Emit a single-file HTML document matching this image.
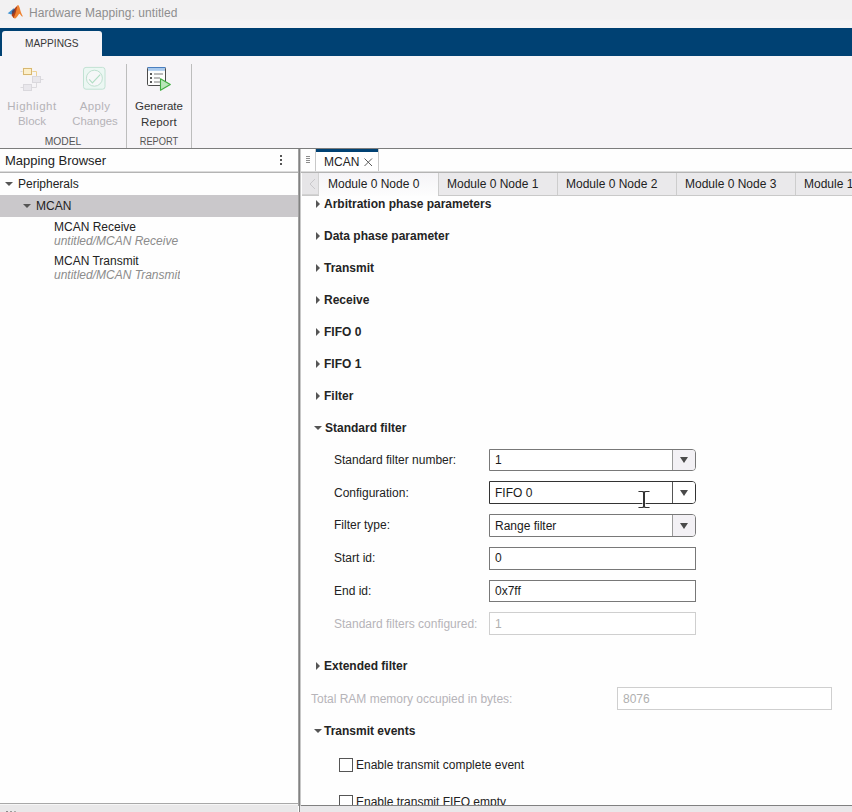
<!DOCTYPE html>
<html>
<head>
<meta charset="utf-8">
<title>Hardware Mapping: untitled</title>
<style>
*{box-sizing:border-box;margin:0;padding:0}
html,body{width:852px;height:812px;overflow:hidden;background:#fdfdfd;font-family:"Liberation Sans",sans-serif;color:#1a1a1a}
.abs{position:absolute}
#root{position:relative;width:852px;height:812px;overflow:hidden;background:#fefefe}
.t{position:absolute;white-space:nowrap;line-height:1}
/* title */
#title{left:0;top:0;width:852px;height:28px;background:linear-gradient(#f2f1f2 0,#f2f1f2 19px,#f6f5f6 21px,#f6f5f6 28px)}
#bluebar{left:0;top:28px;width:852px;height:28px;background:#004173}
#maptab{left:2px;top:31px;width:100px;height:26px;background:#f6f4f7;border-radius:3px 3px 0 0}
#strip{left:0;top:56px;width:852px;height:92px;background:#f6f4f7}
#stripline{left:0;top:148px;width:852px;height:1px;background:#7c7c7c}
.vsep{position:absolute;width:1px;background:#bdbdbd;top:64px;height:84px}
.tsl{font-size:11.5px;text-align:center;line-height:14px}
.dis{color:#b5b3b8}
.sec{font-size:10.5px;color:#555;text-align:center}
/* panels */
#left{left:0;top:149px;width:298px;height:655px;background:#fefefe}
#divider{display:none}
#right{left:300px;top:149px;width:552px;height:657px;background:#fefefe}
#bottom{left:0;top:804px;width:298px;height:9px;background:#e9e8e9}
.b{font-weight:bold;color:#242424}
.f13{font-size:13px}
.f12{font-size:12px}
.inp{position:absolute;height:22px;border:1px solid #787878;background:#fff;font-size:12px;line-height:20px;padding-left:5px}
.dd{border-radius:0 4px 4px 0}
.ddbtn{position:absolute;right:0;top:0;bottom:0;width:23px;border-left:1px solid #9a9a9a;background:#f3f1f5;border-radius:0 3px 3px 0}
.ddbtn:after{content:"";position:absolute;left:7px;top:7px;border-left:4.5px solid transparent;border-right:4.5px solid transparent;border-top:6px solid #4a4a4a}
.dd2:after{top:8px}
.tri-r{position:absolute;width:0;height:0;border-top:4px solid transparent;border-bottom:4px solid transparent;border-left:4px solid #555}
.tri-d{position:absolute;width:0;height:0;border-left:4px solid transparent;border-right:4px solid transparent;border-top:4px solid #555}
.cb{position:absolute;width:14px;height:14px;border:1px solid #555;background:#fff}
</style>
</head>
<body>
<div id="root">
  <!-- title bar -->
  <div id="title" class="abs"></div>
  <svg class="abs" style="left:7px;top:4px" width="17" height="16" viewBox="0 0 17 16">
    <path d="M0.600 9.200C2.500 8.300 4.500 6.300 6.500 4.300L8 6.500L6 10.800C4.500 10.500 2.500 10 0.600 9.200Z" fill="#3f93d2"/>
    <path d="M5 7.500L8.500 3.500L10.500 1.500L11 10L8.500 14.300L6.500 14L4.800 11.500Z" fill="#b13f16"/>
    <path d="M5 7L8 4.500L7.500 8L5.500 10.500Z" fill="#28467c" opacity="0.700"/>
    <path d="M10.600 1C11.600 0.600 12.400 2.500 13 5C13.800 8 14.800 10.800 16 12.600L14.600 12.300C13.600 10.800 12.900 9.600 12.200 9.700C11.200 11.300 9.600 14 7.800 14.600L6.600 13.600C8.800 10.500 9.600 4.500 10.600 1Z" fill="#ee8230"/>
  </svg>
  <div class="t" id="ttl" style="left:29px;top:7px;font-size:12px;color:#8e8e8e;letter-spacing:0.07px">Hardware Mapping: untitled</div>

  <div id="bluebar" class="abs"></div>
  <div id="maptab" class="abs"></div>
  <div class="t" id="mp" style="left:25px;top:38px;font-size:11px;color:#383838;transform:scaleX(0.924);transform-origin:0 0">MAPPINGS</div>

  <div id="strip" class="abs"></div>
  <div id="stripline" class="abs"></div>
  <div class="vsep" style="left:126px"></div>
  <div class="vsep" style="left:191px"></div>

  <!-- toolstrip icons -->
  <svg class="abs" style="left:19px;top:66px" width="26" height="26" viewBox="0 0 26 26">
    <g fill="none" stroke-width="1">
      <path d="M1.500 5.500h3M21.500 13.500h3M17.500 17v4.500h-5M1.500 21.500h3" stroke="#dcdade"/>
      <path d="M12.500 5.500h5v4.500" stroke="#ecd193"/>
    </g>
    <rect x="3.500" y="1.500" width="10" height="8" fill="#fdf4dc" opacity="0.900"/>
    <rect x="4.500" y="2.500" width="8" height="6" fill="#fcefcb" stroke="#d8b772"/>
    <rect x="13.500" y="10.500" width="8" height="6" fill="#e9e7ec" stroke="#dad8dd"/>
    <rect x="4.500" y="18.500" width="8" height="6" fill="#e9e7ec" stroke="#dad8dd"/>
  </svg>
  <svg class="abs" style="left:82px;top:66px" width="25" height="25" viewBox="0 0 25 25">
    <rect x="1.500" y="1.400" width="21.500" height="21.800" rx="2.500" fill="#ecf7f3" stroke="#c2e2d4"/>
    <circle cx="12.400" cy="12.200" r="8" fill="#f6f7f8" stroke="#bfe0d0"/>
    <path d="M7.200 13.400l3.200 3.400l7.800-8.100" fill="none" stroke="#b2dec5" stroke-width="1.200"/>
  </svg>
  <svg class="abs" style="left:146px;top:66px" width="26" height="26" viewBox="0 0 26 26">
    <rect x="1.500" y="1.500" width="18" height="18" rx="1.200" fill="#fdfdfd" stroke="#4c4c4c"/>
    <rect x="2" y="2" width="17" height="2.800" fill="#a9c9ed"/>
    <path d="M1.500 1.500h18" stroke="#4a7fc0" stroke-width="1"/>
    <g fill="#5a5a5a"><rect x="4" y="7" width="2" height="2"/><rect x="4" y="11" width="2" height="2"/><rect x="4" y="15" width="2" height="2"/></g>
    <g fill="#7a7a7a"><rect x="8" y="7.500" width="9" height="1"/><rect x="8" y="11.500" width="6" height="1"/><rect x="8" y="15.500" width="6" height="1"/></g>
    <path d="M14.500 12.700l9.800 5.800l-9.800 5.800z" fill="#b9e6b9" stroke="#41ad41" stroke-width="1.100" stroke-linejoin="round"/>
  </svg>

  <div class="t tsl dis" id="l1" style="left:0;width:64px;top:99px;letter-spacing:0.54px">Highlight</div>
  <div class="t tsl dis" id="l2" style="left:0;width:64px;top:114px">Block</div>
  <div class="t tsl dis" id="l3" style="left:64px;width:62px;top:99px;letter-spacing:0.38px">Apply</div>
  <div class="t tsl dis" id="l4" style="left:64px;width:62px;top:114px;transform:scaleX(0.985)">Changes</div>
  <div class="t tsl" id="l5" style="left:127px;width:64px;top:98px;transform:translateY(0.5px);color:#333">Generate</div>
  <div class="t tsl" id="l6" style="left:127px;width:64px;top:114px;transform:translateY(0.5px);color:#333;letter-spacing:0.23px">Report</div>
  <div class="t sec" id="l7" style="left:0;width:126px;top:136px;transform:scaleX(0.98)">MODEL</div>
  <div class="t sec" id="l8" style="left:127px;width:64px;top:136px;transform:scaleX(0.885)">REPORT</div>

  <!-- left panel -->
  <div id="left" class="abs"></div>
  <div class="abs" style="left:0;top:171px;width:298px;height:1px;background:#dcdcdc"></div><div class="abs" style="left:0;top:172px;width:298px;height:1px;background:#b4b4b4"></div>
  <div class="t" style="left:5px;top:154px;font-size:13px;color:#222">Mapping Browser</div>
  <div class="abs" style="left:280px;top:155px;width:2px;height:2px;background:#555;box-shadow:0 4px 0 #555,0 8px 0 #555"></div>
  <div class="tri-d" style="left:5px;top:182px"></div>
  <div class="t f12" style="left:18px;top:178px;color:#222">Peripherals</div>
  <div class="abs" style="left:0;top:195px;width:298px;height:22px;background:#cac8cb"></div>
  <div class="tri-d" style="left:23px;top:204px"></div>
  <div class="t f12" style="left:36px;top:200px;color:#222">MCAN</div>
  <div class="t f12" style="left:54px;top:221px;color:#222">MCAN Receive</div>
  <div class="t f12" style="left:54px;top:235px;color:#8c8c8c;font-style:italic">untitled/MCAN Receive</div>
  <div class="t f12" style="left:54px;top:255px;color:#222">MCAN Transmit</div>
  <div class="t f12" style="left:54px;top:269px;color:#8c8c8c;font-style:italic;width:126px;overflow:hidden">untitled/MCAN Transmit</div>
  

  <div id="divider" class="abs"></div>

  <!-- right panel -->
  <div id="right" class="abs"></div>
  <svg class="abs" style="left:305px;top:155px" width="6" height="9" viewBox="0 0 6 9"><path d="M1 1.500h4M1 3.500h4M1 5.500h4M1 7.500h4" stroke="#8c8c8c" stroke-width="1"/></svg>
  <div class="abs" style="left:315px;top:149px;width:64px;height:23px;background:#fff;border-left:1px solid #c8c8c8;border-right:1px solid #c8c8c8"></div><div class="abs" style="left:316px;top:149px;width:62px;height:3px;background:#004173"></div>
  <div class="t f12" style="left:324px;top:156px;color:#222">MCAN</div>
  <svg class="abs" style="left:364px;top:158px" width="9" height="9" viewBox="0 0 9 9"><path d="M0.500 0.500l7.500 7.500M8 0.500l-7.500 7.500" stroke="#5a5a5a" stroke-width="1" fill="none"/></svg>
  <div class="abs" style="left:300px;top:171px;width:552px;height:1px;background:#dcdcdc"></div><div class="abs" style="left:300px;top:172px;width:552px;height:1px;background:#b4b4b4"></div>

  <!-- subtabs -->
  <div class="abs" style="left:300px;top:173px;width:552px;height:23px;background:#eae9eb;border-bottom:1px solid #c9c9c9"></div>
  <div class="abs" style="left:302px;top:173px;width:17px;height:22px;background:#e6e5e7;border-right:1px solid #d2d2d2;border-bottom:1px solid #d2d2d2"></div><div class="abs" style="left:300px;top:173px;width:2px;height:23px;background:#fefefe"></div>
  <svg class="abs" style="left:309px;top:178px" width="7" height="12" viewBox="0 0 7 12"><path d="M6 1L1 6l5 5" fill="none" stroke="#c9c8cb" stroke-width="1"/></svg>
  <div class="abs" style="left:319px;top:173px;width:119px;height:23px;background:linear-gradient(#f5f4f7,#fdfdfd)"></div>
  <div class="abs" style="left:438px;top:173px;width:1px;height:22px;background:#cdcdcd"></div>
  <div class="abs" style="left:557px;top:173px;width:1px;height:22px;background:#cdcdcd"></div>
  <div class="abs" style="left:676px;top:173px;width:1px;height:22px;background:#cdcdcd"></div>
  <div class="abs" style="left:795px;top:173px;width:1px;height:22px;background:#cdcdcd"></div>
  <div class="t f12" style="left:328px;top:178px;color:#222">Module 0 Node 0</div>
  <div class="t f12" style="left:447px;top:178px;color:#222">Module 0 Node 1</div>
  <div class="t f12" style="left:566px;top:178px;color:#222">Module 0 Node 2</div>
  <div class="t f12" style="left:685px;top:178px;color:#222">Module 0 Node 3</div>
  <div class="t f12" style="left:804px;top:178px;color:#222">Module 1 Node 0</div>

  <!-- sections -->
  <div class="tri-r" style="left:316px;top:200px"></div><div class="t f12 b" style="left:324px;top:198px">Arbitration phase parameters</div>
  <div class="tri-r" style="left:316px;top:232px"></div><div class="t f12 b" style="left:324px;top:230px">Data phase parameter</div>
  <div class="tri-r" style="left:316px;top:264px"></div><div class="t f12 b" style="left:324px;top:262px">Transmit</div>
  <div class="tri-r" style="left:316px;top:296px"></div><div class="t f12 b" style="left:324px;top:294px">Receive</div>
  <div class="tri-r" style="left:316px;top:328px"></div><div class="t f12 b" style="left:324px;top:326px">FIFO 0</div>
  <div class="tri-r" style="left:316px;top:360px"></div><div class="t f12 b" style="left:324px;top:358px">FIFO 1</div>
  <div class="tri-r" style="left:316px;top:392px"></div><div class="t f12 b" style="left:324px;top:390px">Filter</div>
  <div class="tri-d" style="left:314px;top:426px"></div><div class="t f12 b" style="left:325px;top:422px">Standard filter</div>

  <div class="t f12" style="left:334px;top:454px;color:#222">Standard filter number:</div>
  <div class="inp dd" style="left:489px;top:449px;width:207px">1<div class="ddbtn"></div></div>
  <div class="t f12" style="left:334px;top:487px;color:#222">Configuration:</div>
  <div class="inp dd" style="left:489px;top:481px;width:207px;height:23px;line-height:22px;border-color:#333">FIFO 0<div class="ddbtn dd2" style="background:#fff;border-left-color:#555"></div></div>
  <div class="t f12" style="left:334px;top:519px;color:#222">Filter type:</div>
  <div class="inp dd" style="left:489px;top:514px;width:207px;height:23px;line-height:22px">Range filter<div class="ddbtn dd2"></div></div>
  <div class="t f12" style="left:334px;top:552px;color:#222">Start id:</div>
  <div class="inp" style="left:489px;top:547px;width:207px;height:23px">0</div>
  <div class="t f12" style="left:334px;top:585px;color:#222">End id:</div>
  <div class="inp" style="left:489px;top:580px;width:207px">0x7ff</div>
  <div class="t f12" style="left:334px;top:618px;color:#b6b4b9">Standard filters configured:</div>
  <div class="inp" style="left:489px;top:612px;width:207px;height:23px;padding-top:1px;border-color:#cfcfcf;color:#b0b0b0">1</div>

  <!-- I-beam cursor -->
  <svg class="abs" style="left:637px;top:489px" width="14" height="20" viewBox="0 0 14 20"><g fill="none" stroke-linecap="square"><path d="M2 2.500h3.500l1.500 1l1.500-1h3.500M7 3.500v13M2 18.500h3.500l1.500-1l1.500 1h3.500" stroke="#fff" stroke-width="3.200"/><path d="M2 2.500h3.500l1.500 1l1.500-1h3.500M2 18.500h3.500l1.500-1l1.500 1h3.500" stroke="#333" stroke-width="1.100"/><path d="M7 3.500v14" stroke="#333" stroke-width="2"/></g></svg>

  <div class="tri-r" style="left:316px;top:662px"></div><div class="t f12 b" style="left:324px;top:660px">Extended filter</div>
  <div class="t f12" style="left:311px;top:693px;color:#b6b4b9">Total RAM memory occupied in bytes:</div>
  <div class="inp" style="left:617px;top:687px;width:215px;height:23px;padding-top:1px;border-color:#cfcfcf;color:#b0b0b0">8076</div>
  <div class="tri-d" style="left:314px;top:729px"></div><div class="t f12 b" style="left:324px;top:725px">Transmit events</div>
  <div class="cb" style="left:339px;top:758px"></div>
  <div class="t f12" style="left:356px;top:759px;color:#222">Enable transmit complete event</div>
  <div class="cb" style="left:339px;top:795px"></div>
  <div class="t f12" style="left:356px;top:796px;color:#222">Enable transmit FIFO empty</div>

  <div id="bottom" class="abs"></div>
  <div class="abs" style="left:0;top:803px;width:298px;height:1px;background:#a8a8a8"></div><div class="abs" style="left:0;top:804px;width:298px;height:1px;background:#f6f6f6"></div><div class="abs" style="left:6px;top:811px;width:2px;height:1px;background:#8a8a8a;box-shadow:4px 0 0 #999,8px 0 0 #aaa"></div>
  <div class="abs" style="left:300px;top:805px;width:552px;height:7px;background:#e9e8ea;border-top:1px solid #808080"></div>
  <div class="abs" style="left:298px;top:149px;width:1px;height:657px;background:#a2a2a2"></div><div class="abs" style="left:299px;top:149px;width:1px;height:657px;background:#828282"></div><div class="abs" style="left:300px;top:149px;width:1px;height:657px;background:#c8c8c8"></div><div class="abs" style="left:299px;top:806px;width:1px;height:6px;background:#848484"></div>
</div>
</body>
</html>
